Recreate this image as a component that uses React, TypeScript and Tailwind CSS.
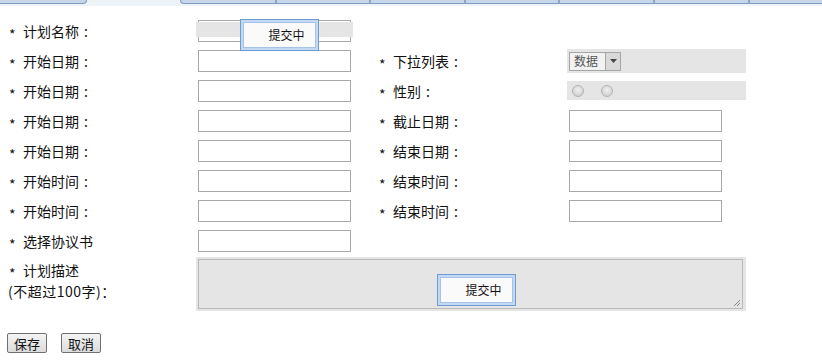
import React from "react";

const tabWidths = [95, 94, 95, 94, 95, 95, 74];

function TextBox() {
  return <div className="h-[22px] w-[153px] border border-[#a9a9a9] bg-white" />;
}

function Busy({ className }: { className: string }) {
  // "提交中" overlay shown while the page is submitting
  return (
    <div className={`absolute border border-[#6f9bd5] bg-[#c2d8f3] p-[2px] ${className}`}>
      <div className="flex h-full w-full items-center justify-center border border-[#a6c2e9] bg-[#fafafa] pl-[14px] text-[12px] text-[#111]">
        提交中
      </div>
    </div>
  );
}

function Star({ low = true }: { low?: boolean }) {
  return (
    <span className={`relative inline-block w-[15px] pl-[1px] leading-none ${low ? "top-[3px]" : "top-0 h-[12px] pt-[1px]"}`}>*</span>
  );
}

function Label({ text, wide }: { text: string; wide?: boolean }) {
  const colon = text.endsWith("：");
  return (
    <div className={`flex h-[22px] items-center whitespace-pre ${wide ? "w-[191px]" : "w-[190px]"}`}>
      <Star />
      {colon ? text.slice(0, -1) : text}
      {colon && <span className="pl-[5px]">:</span>}
    </div>
  );
}

export default function App() {
  const rows: { left: string; right?: string; kind?: "select" | "radio" | "text" }[] = [
    { left: "开始日期：", right: "下拉列表：", kind: "select" },
    { left: "开始日期：", right: "性别：", kind: "radio" },
    { left: "开始日期：", right: "截止日期：", kind: "text" },
    { left: "开始日期：", right: "结束日期：", kind: "text" },
    { left: "开始时间：", right: "结束时间：", kind: "text" },
    { left: "开始时间：", right: "结束时间：", kind: "text" },
    { left: "选择协议书" },
  ];

  return (
    <div className="h-[361px] w-[822px] overflow-hidden bg-white font-['SimSun','Noto_Sans_CJK_SC',sans-serif] text-[14px] text-[#111]">
      {/* tab strip remnant */}
      <div className="flex h-[6px] bg-[#eef3f7]">
        <div className="h-[4px] w-[87px] rounded-br-[4px] border-b border-r border-[#7d9cbf] bg-[#c6d6e8]" />
        <div className="w-[93px]" />
        {tabWidths.map((w, i) => (
          <div
            key={i}
            style={{ width: w }}
            className={`h-[4px] border-b border-[#7d9cbf] bg-[#c6d6e8] ${i === 0 ? "rounded-bl-[4px] border-l" : "border-l-2 border-l-[#8aa6c4]"}`}
          />
        ))}
      </div>

      <div className="pl-2 pt-[14px]">
        {/* 计划名称 */}
        <div className="flex h-[30px] items-start">
          <Label text="计划名称：" />
          <div className="relative h-[22px] w-[153px] border border-[#a9a9a9]">
            <div className="absolute left-[-3px] right-[-3px] top-[1px] h-[15px] bg-[#e5e5e5]" />
            <Busy className="left-[41px] top-[-2px] h-[32px] w-[79px]" />
          </div>
        </div>

        {rows.map((r, i) => (
          <div key={i} className="flex h-[30px] items-start">
            <Label text={r.left} />
            <TextBox />
            {r.right && (
              <div className="ml-[27px] flex items-start">
                <Label text={r.right} wide />
                {r.kind === "text" && <TextBox />}
                {r.kind === "select" && (
                  <div className="ml-[-2px] mt-[-1px] flex h-[24px] w-[179px] items-center bg-[#e5e5e5] pl-[2px]">
                    <div className="flex h-[19px] w-[52px] items-center border border-[#a5a5a5] bg-[#f2f2f2]">
                      <span className="px-[4px] text-[12px] leading-none text-[#555]">数据</span>
                      <span className="ml-auto flex h-[17px] w-[15px] items-center justify-center border-l border-[#a5a5a5] bg-[#d9d9d9]">
                        <svg width="7" height="4" viewBox="0 0 7 4">
                          <path d="M0 0h7L3.5 4z" fill="#444" />
                        </svg>
                      </span>
                    </div>
                  </div>
                )}
                {r.kind === "radio" && (
                  <div className="ml-[-2px] mt-[1px] flex h-[19px] w-[179px] items-center gap-[17px] bg-[#e5e5e5] pl-[5px]">
                    <span className="h-[12px] w-[12px] rounded-full border border-[#b3b3b3] bg-[radial-gradient(circle_at_50%_40%,#f0f0f0,#c8c8c8)]" />
                    <span className="h-[12px] w-[12px] rounded-full border border-[#b3b3b3] bg-[radial-gradient(circle_at_50%_40%,#f0f0f0,#c8c8c8)]" />
                  </div>
                )}
              </div>
            )}
          </div>
        ))}

        {/* 计划描述 */}
        <div className="mt-[-3px] flex items-start">
          <div className="w-[188px] pt-[3px] leading-[21px]">
            <div className="flex h-[21px] items-center">
              <Star low={false} />
              计划描述
            </div>
            <div className="tracking-[0.5px]">(不超过100字)：</div>
          </div>
          <div className="relative h-[54px] w-[550px] bg-[#e5e5e5] p-[2px] pr-[3px]">
            <div className="relative h-[50px] w-full border border-[#b9b9b9]">
              <svg className="absolute bottom-[1px] right-[1px]" width="9" height="9" viewBox="0 0 9 9">
                <path d="M2 8L8 2M5 8L8 5" stroke="#888" strokeWidth="1" />
              </svg>
            </div>
            <Busy className="left-[241px] top-[17px] h-[32px] w-[79px]" />
          </div>
        </div>

        <div className="mt-[22px] flex gap-[14px]">
          <button className="ml-[-1px] h-[20px] w-[40px] rounded-[2px] border border-[#707070] bg-gradient-to-b from-[#f4f4f4] to-[#dcdcdc] text-[13px] leading-none text-[#111]">
            保存
          </button>
          <button className="h-[20px] w-[40px] rounded-[2px] border border-[#707070] bg-gradient-to-b from-[#f4f4f4] to-[#dcdcdc] text-[13px] leading-none text-[#111]">
            取消
          </button>
        </div>
      </div>
    </div>
  );
}
